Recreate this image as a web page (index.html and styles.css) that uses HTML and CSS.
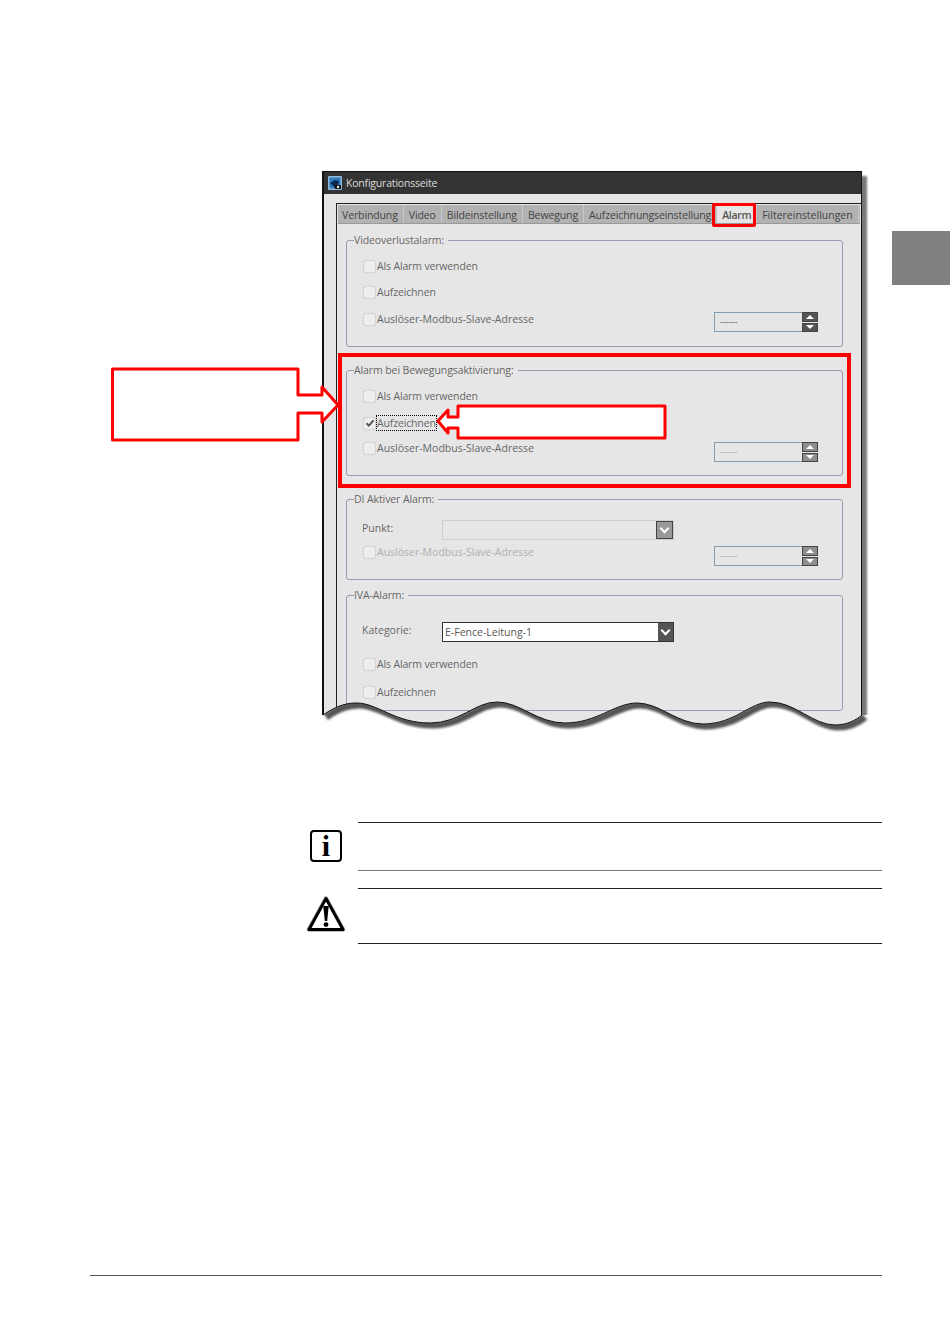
FILE: index.html
```html
<!DOCTYPE html>
<html lang="de">
<head>
  <meta charset="UTF-8" />
  <title>Konfigurationsseite</title>
  <link rel="stylesheet" href="styles.css">
</head>
<body>
  <div class="page">
    <div class="side-tab"></div>

    <div class="window">
      <div class="titlebar">
        <svg class="app-icon" viewBox="0 0 14 14" width="14" height="14">
          <rect x="0" y="0" width="14" height="14" rx="1" fill="#8fbcdc"/>
          <rect x="1.5" y="1.5" width="11" height="11" fill="#2f7ab8"/>
          <path d="M2 7l5-3 4 1-1 4-5 1z" fill="#0d2a55"/>
          <path d="M6 9h7v4H7z" fill="#111"/>
          <circle cx="10" cy="11" r="1.2" fill="#eee"/>
        </svg>
        <span>Konfigurationsseite</span>
      </div>
      <div class="client">
        <div class="pane">
          <div class="tabs">
            <div class="tab">Verbindung</div>
            <div class="tab">Video</div>
            <div class="tab">Bildeinstellung</div>
            <div class="tab">Bewegung</div>
            <div class="tab">Aufzeichnungseinstellung</div>
            <div class="tab active">Alarm</div>
            <div class="tab">Filtereinstellungen</div>
          </div>

          <div class="group group-video">
            <div class="group-title">Videoverlustalarm:</div>
            <div class="row"><i class="check"></i><span class="tight">Als Alarm verwenden</span></div>
            <div class="row"><i class="check"></i><span class="tight">Aufzeichnen</span></div>
            <div class="row">
              <i class="check"></i><span>Auslöser-Modbus-Slave-Adresse</span>
              <div class="spinner">
                <div class="spin-value">------</div>
                <div class="spin-btns"><b class="up"></b><b class="down"></b></div>
              </div>
            </div>
          </div>

          <div class="group group-motion">
            <div class="group-title">Alarm bei Bewegungsaktivierung:</div>
            <div class="row"><i class="check"></i><span class="tight">Als Alarm verwenden</span></div>
            <div class="row">
              <i class="check checked">
                <svg viewBox="0 0 12 12" width="12" height="12"><path d="M2.5 6.2l2.4 2.4 4.6-5.2" fill="none" stroke="#555" stroke-width="2"/></svg>
              </i>
              <span class="focused tight">Aufzeichnen</span>
            </div>
            <div class="row">
              <i class="check"></i><span>Auslöser-Modbus-Slave-Adresse</span>
              <div class="spinner faded">
                <div class="spin-value">------</div>
                <div class="spin-btns"><b class="up"></b><b class="down"></b></div>
              </div>
            </div>
          </div>

          <div class="group group-di">
            <div class="group-title">DI Aktiver Alarm:</div>
            <div class="row row-select">
              <label>Punkt:</label>
              <div class="select disabled"><div class="select-value"></div><b class="select-btn"></b></div>
            </div>
            <div class="row off">
              <i class="check"></i><span>Auslöser-Modbus-Slave-Adresse</span>
              <div class="spinner faded">
                <div class="spin-value">------</div>
                <div class="spin-btns"><b class="up"></b><b class="down"></b></div>
              </div>
            </div>
          </div>

          <div class="group group-iva">
            <div class="group-title">IVA-Alarm:</div>
            <div class="row row-select">
              <label>Kategorie:</label>
              <div class="select"><div class="select-value">E-Fence-Leitung-1</div><b class="select-btn"></b></div>
            </div>
            <div class="row"><i class="check"></i><span class="tight">Als Alarm verwenden</span></div>
            <div class="row"><i class="check"></i><span class="tight">Aufzeichnen</span></div>
          </div>
        </div>
      </div>
    </div>

    <!-- torn lower edge of the screenshot -->
    <svg class="tear" viewBox="0 0 570 50" width="570" height="50">
      <defs>
        <filter id="soft" x="-5%" y="-50%" width="110%" height="200%"><feGaussianBlur stdDeviation="0.9"/></filter>
        <clipPath id="below"><path d="M0 15 L8 15 C24 4 34 3 42 3 C62 3 80 23 115 23 C145 23 160 2 182 2 C205 2 222 23 250 23 C282 23 300 3 322 3 C345 3 362 24 388 24 C420 24 435 2 455 2 C480 2 498 25 520 25 C531 25 540 21 547 15 L570 15 L570 50 L0 50Z"/></clipPath>
      </defs>
      <path fill="#fff" d="M0 15 L8 15 C24 4 34 3 42 3 C62 3 80 23 115 23 C145 23 160 2 182 2 C205 2 222 23 250 23 C282 23 300 3 322 3 C345 3 362 24 388 24 C420 24 435 2 455 2 C480 2 498 25 520 25 C531 25 540 21 547 15 L570 15 L570 50 L0 50Z"/>
      <g clip-path="url(#below)">
        <path fill="none" stroke="#555" stroke-width="7" filter="url(#soft)" transform="translate(3 2)" d="M8 15 C24 4 34 3 42 3 C62 3 80 23 115 23 C145 23 160 2 182 2 C205 2 222 23 250 23 C282 23 300 3 322 3 C345 3 362 24 388 24 C420 24 435 2 455 2 C480 2 498 25 520 25 C531 25 540 21 547 15"/>
      </g>
      <path fill="none" stroke="#111" stroke-width="1" d="M8 15 C24 4 34 3 42 3 C62 3 80 23 115 23 C145 23 160 2 182 2 C205 2 222 23 250 23 C282 23 300 3 322 3 C345 3 362 24 388 24 C420 24 435 2 455 2 C480 2 498 25 520 25 C531 25 540 21 547 15"/>
    </svg>

    <!-- red markup drawn over the screenshot -->
    <div class="mark mark-tab"></div>
    <div class="mark mark-group"></div>
    <svg class="callouts" viewBox="0 0 600 90" width="600" height="90">
      <path class="callout" d="M2.5 3H188V29H212V21L228 39 212 56V47H188V74H2.5Z"/>
      <path class="callout" d="M348 40H555V72H348V62H338V67L328 55 338 44V51H348Z"/>
    </svg>

    <div class="notes">
      <div class="note note-info">
        <div class="note-icon"><div class="info-icon">i</div></div>
        <div class="note-body"></div>
      </div>
      <div class="note note-warn">
        <div class="note-icon">
          <svg viewBox="0 0 40 40" width="40" height="40">
            <path d="M20 2.5L37 33.5H3Z" fill="#fff" stroke="#aaa" stroke-width="4.6" stroke-linejoin="round"/>
            <path d="M20 2.5L37 33.5H3Z" fill="#fff" stroke="#000" stroke-width="3" stroke-linejoin="round"/>
            <path d="M17.3 10h5.4l-1.5 15h-2.4z" fill="#000"/>
            <circle cx="20" cy="28.6" r="2.4" fill="#000"/>
          </svg>
        </div>
        <div class="note-body"></div>
      </div>
    </div>

    <div class="footer"></div>
  </div>
</body>
</html>
```

FILE: styles.css
```css
body {
  margin: 0;
  background: #fff;
  font-family: "Open Sans", "Noto Sans", sans-serif;
  font-size: 10.5px;
  color: #666;
}
.page {
  position: relative;
  width: 950px;
  height: 1344px;
  overflow: hidden;
  padding-top: 171px;
  box-sizing: border-box;
}
.side-tab {
  position: absolute;
  left: 892px;
  top: 231px;
  width: 58px;
  height: 54px;
  background: #808080;
}

/* window */
.window {
  margin-left: 322px;
  width: 540px;
  height: 560px;
  box-sizing: border-box;
  border: 1px solid #111;
  border-left-width: 2px;
  background: #e6e6e6;
  box-shadow: 5px 5px 2px #777;
}
.titlebar {
  height: 22px;
  background: #333;
  color: #ddd;
  display: flex;
  align-items: center;
  gap: 4px;
  padding-left: 4px;
  letter-spacing: -0.2px;
}
.app-icon {
  flex: none;
}
.client {
  padding: 9px 0 0 12px;
}
.pane {
  border-top: 1px solid #222;
  border-left: 1px solid #222;
  height: 520px;
  padding-left: 9px;
}

/* tabs */
.tabs {
  display: flex;
  height: 19px;
  margin: 1px 1px 0 -8px;
  background: #b2b2b2;
  border-bottom: 1px solid #999;
  box-sizing: border-box;
}
.tab {
  padding: 0 5px;
  line-height: 20px;
  letter-spacing: -0.12px;
  color: #444;
  border-right: 1px solid #c8c8c8;
  white-space: nowrap;
}
.tab:first-child {
  padding-left: 4px;
}
.tab.active {
  background: #e6e6e6;
  color: #555;
  font-weight: 600;
  letter-spacing: -0.3px;
}
.tab:last-child {
  letter-spacing: 0;
}

/* groups */
.group {
  width: 497px;
  box-sizing: border-box;
  border: 1px solid #9a9ab2;
  border-radius: 3px;
  padding-left: 16px;
}
.group-title {
  width: fit-content;
  margin: -9px 0 0 -9px;
  padding: 0 4px 0 0;
  height: 16px;
  line-height: 16px;
  letter-spacing: -0.1px;
  background: #e6e6e6;
  color: #666;
}
.group-video {
  margin-top: 16px;
  height: 107px;
}
.group-motion {
  margin-top: 23px;
  height: 106px;
}
.group-di {
  margin-top: 23px;
  height: 81px;
}
.group-iva {
  margin-top: 15px;
  height: 116px;
}
.group-video .group-title,
.group-motion .group-title {
  margin-bottom: 5px;
}
.row {
  height: 26px;
  display: flex;
  align-items: center;
  gap: 2px;
}
.group-video .row:last-child,
.group-motion .row:nth-child(3) {
  margin-top: 1px;
}
.group-motion .row:last-child,
.group-di .row:last-child {
  margin-top: -1px;
}
.row-select {
  height: 24px;
}
.group-di .row-select {
  margin-top: 9px;
}
.group-iva .row-select {
  margin-top: 15px;
  margin-bottom: 9px;
}
.group-iva .row-select + .row + .row {
  margin-top: 2px;
}
.row label {
  width: 78px;
  flex: none;
  margin-left: -1px;
}
.tight {
  letter-spacing: -0.15px;
}
.off {
  color: #b0b0b0;
}
.check {
  flex: none;
  width: 13px;
  height: 13px;
  margin-right: -1px;
  border: 1px solid #d4d4d4;
  border-radius: 3px;
  background: #eee;
  box-sizing: border-box;
  display: flex;
  align-items: center;
  justify-content: center;
  box-shadow: 0 0 1px #ccc;
}
.check svg {
  flex: none;
}
.focused {
  outline: 1px dotted #000;
}

/* spinner */
.spinner {
  display: flex;
  width: 104px;
  height: 20px;
  margin: 6px 24px 0 auto;
}
.group-motion .spinner,
.group-di .spinner {
  margin-top: 8px;
}
.spin-value {
  flex: 1;
  box-sizing: border-box;
  border: 1px solid #7f9db3;
  border-right: 0;
  padding-left: 5px;
  line-height: 17px;
  font-size: 9px;
  color: #555;
}
.spin-btns {
  width: 16px;
  display: flex;
  flex-direction: column;
  gap: 1px;
}
.spin-btns b {
  flex: 1;
  background: #555;
  border: 1px solid #444;
  display: flex;
  align-items: center;
  justify-content: center;
}
.spin-btns .up::after,
.spin-btns .down::after {
  content: "";
  border-left: 4px solid transparent;
  border-right: 4px solid transparent;
}
.spin-btns .up::after {
  border-bottom: 4px solid #fff;
}
.spin-btns .down::after {
  border-top: 4px solid #fff;
}
.faded .spin-value {
  color: #aaa;
}
.faded .spin-btns b {
  background: #8e8e8e;
}

/* select */
.select {
  display: flex;
  width: 232px;
  height: 20px;
  margin-top: 4px;
  background: #fff;
  border: 1px solid #333;
  box-sizing: border-box;
}
.select-value {
  flex: 1;
  padding-left: 2px;
  line-height: 18px;
  color: #555;
}
.select-btn {
  width: 15px;
  background: #555;
  display: flex;
  align-items: center;
  justify-content: center;
}
.select-btn::after {
  content: "";
  width: 5px;
  height: 5px;
  margin-top: -3px;
  border-right: 2px solid #fff;
  border-bottom: 2px solid #fff;
  transform: rotate(45deg);
}
.select.disabled {
  background: #e6e6e6;
  border-color: #ccd0c4;
}
.select.disabled .select-btn {
  background: #999;
  border: 1px solid #444;
}

/* torn edge */
.tear {
  position: absolute;
  left: 315px;
  top: 700px;
}

/* red markup */
.mark {
  position: absolute;
  box-sizing: border-box;
  border: 3px solid #f00;
}
.mark-tab {
  left: 712px;
  top: 203px;
  width: 44px;
  height: 24px;
  border-radius: 2px;
}
.mark-group {
  left: 338px;
  top: 353px;
  width: 513px;
  height: 135px;
  border-width: 4px;
}
.callouts {
  position: absolute;
  left: 110px;
  top: 366px;
}
.callout {
  fill: #fff;
  stroke: #f00;
  stroke-width: 3;
  stroke-linejoin: round;
}

/* notes */
.notes {
  margin: 91px 0 0 306px;
  width: 576px;
}
.note {
  display: flex;
}
.note-icon {
  width: 52px;
  flex: none;
  display: flex;
  align-items: center;
}
.note-body {
  flex: 1;
  border-top: 1px solid #222;
  border-bottom: 1px solid #222;
}
.note-info {
  height: 49px;
}
.note-info .note-body {
  border-bottom-color: #777;
}
.note-warn {
  height: 56px;
  margin-top: 17px;
}
.info-icon {
  width: 32px;
  height: 32px;
  margin: 0 0 2px 4px;
  box-sizing: border-box;
  border: 2px solid #000;
  border-radius: 4px;
  font-family: "Liberation Serif", serif;
  font-size: 30px;
  font-weight: bold;
  line-height: 28px;
  text-align: center;
  color: #000;
}
.footer {
  margin: 331px 0 0 90px;
  width: 792px;
  border-top: 1px solid #555;
}
```
